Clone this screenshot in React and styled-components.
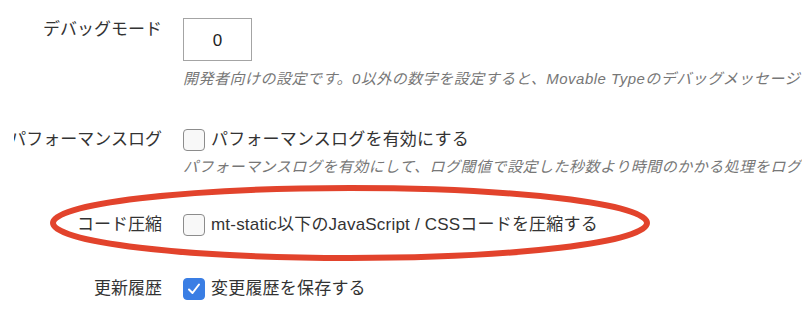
import React from 'react'
import styled, {createGlobalStyle} from 'styled-components'

var GlobalStyle = createGlobalStyle`
  html, body {
    margin: 0;
    padding: 0;
    background: #fff;
  }
  body {
    font-family: "Liberation Sans", "Noto Sans CJK JP", sans-serif;
    color: #333;
  }
`

var Page = styled.div`
  position: relative;
  width: 802px;
  height: 328px;
  overflow: hidden;
  padding: 18px 0 0 14px;
  box-sizing: border-box;
`

var Row = styled.div`
  display: grid;
  grid-template-columns: 148px 1fr;
  column-gap: 21px;
  margin-top: ${(p) => p.top || 0}px;
`

// right aligned, overflows (and is clipped) on the left like the original
var Label = styled.div`
  display: flex;
  justify-content: flex-end;
  overflow: hidden;
  white-space: nowrap;
  font-size: 17px;
  line-height: 22px;
  color: #333;
  padding-top: ${(p) => p.pad || 0}px;
`

var Field = styled.div`
  display: flex;
  flex-direction: column;
  white-space: nowrap;
  min-width: 0;
`

var NumberInput = styled.div`
  width: 67px;
  height: 38px;
  border: 1px solid #a4a4a4;
  display: flex;
  align-items: center;
  justify-content: center;
  font-size: 17px;
  color: #222;
  padding-top: 3px;
  box-sizing: content-box;
`

var Hint = styled.div`
  font-style: italic;
  font-size: 15px;
  letter-spacing: 0.5px;
  line-height: 20px;
  color: #777;
  margin-top: ${(p) => p.top || 6}px;
`

var CheckLine = styled.label`
  display: flex;
  align-items: center;
  gap: 6px;
  font-size: 17px;
  line-height: 22px;
  letter-spacing: 0.2px;
  color: #333;
`

var Box = styled.span`
  width: 20px;
  height: 20px;
  border-radius: 4px;
  border: 1.5px solid ${(p) => (p.checked ? '#3a7ee4' : '#8c8c8c')};
  background: ${(p) => (p.checked ? '#3a7ee4' : '#f8f8f8')};
  display: flex;
  align-items: center;
  justify-content: center;
  flex: none;
`

var Overlay = styled.svg`
  position: absolute;
  left: 0;
  top: 0;
  pointer-events: none;
`

function Checkbox ({checked, children}) {
  return (
    <CheckLine>
      <Box checked={checked}>
        {checked && (
          <svg width='16' height='16' viewBox='0 0 16 16'>
            <path d='M3 8.5 L6.5 12 L13 3.5' fill='none' stroke='#fff' strokeWidth='2' strokeLinecap='round' strokeLinejoin='round' />
          </svg>
        )}
      </Box>
      <span>{children}</span>
    </CheckLine>
  )
}

export default function App () {
  return (
    <Page>
      <GlobalStyle />
      <Row>
        <Label pad={1}>デバッグモード</Label>
        <Field>
          <NumberInput>0</NumberInput>
          <Hint top={8}>開発者向けの設定です。0以外の数字を設定すると、Movable Typeのデバッグメッセージを表示します。</Hint>
        </Field>
      </Row>
      <Row top={40}>
        <Label>パフォーマンスログ</Label>
        <Field>
          <Checkbox>パフォーマンスログを有効にする</Checkbox>
          <Hint>パフォーマンスログを有効にして、ログ閾値で設定した秒数より時間のかかる処理をログに記録します。</Hint>
        </Field>
      </Row>
      <Row top={37}>
        <Label>コード圧縮</Label>
        <Field>
          <Checkbox>mt-static以下のJavaScript / CSSコードを圧縮する</Checkbox>
        </Field>
      </Row>
      <Row top={42}>
        <Label>更新履歴</Label>
        <Field>
          <Checkbox checked>変更履歴を保存する</Checkbox>
        </Field>
      </Row>
      <Overlay width='802' height='328'>
        <ellipse cx='350' cy='223' rx='297' ry='35' fill='none' stroke='#e2432c' strokeWidth='6' />
      </Overlay>
    </Page>
  )
}
